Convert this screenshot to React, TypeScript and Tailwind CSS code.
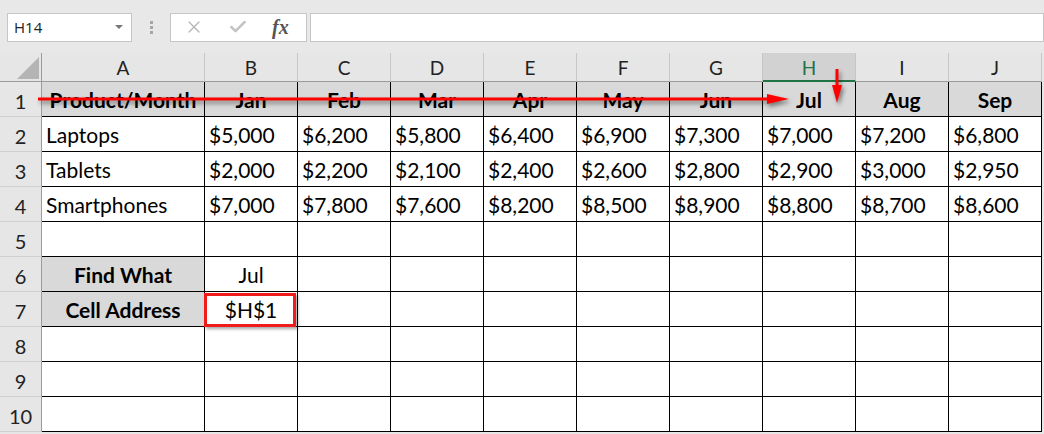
import { X, Check } from 'lucide-react'

const COLS = ['A', 'B', 'C', 'D', 'E', 'F', 'G', 'H', 'I', 'J']

const HEADER = ['Product/Month', 'Jan', 'Feb', 'Mar', 'Apr', 'May', 'Jun', 'Jul', 'Aug', 'Sep']

const DATA: string[][] = [
  ['Laptops', '$5,000', '$6,200', '$5,800', '$6,400', '$6,900', '$7,300', '$7,000', '$7,200', '$6,800'],
  ['Tablets', '$2,000', '$2,200', '$2,100', '$2,400', '$2,600', '$2,800', '$2,900', '$3,000', '$2,950'],
  ['Smartphones', '$7,000', '$7,800', '$7,600', '$8,200', '$8,500', '$8,900', '$8,800', '$8,700', '$8,600'],
]

const font = "font-['Lato','Liberation_Sans',sans-serif]"

function FormulaBar() {
  return (
    <div className="h-[53px] flex items-center pl-[7px] pt-[1px] bg-[#e8e8e8]">
      {/* Name box */}
      <div className="w-[125px] h-[29px] bg-white border border-[#c6c6c6] flex items-center pl-[6px] pr-[8px]">
        <span className="flex-1 text-[15px] text-[#222] font-['Open_Sans',sans-serif]">H14</span>
        <span className="w-0 h-0 border-l-[4px] border-r-[4px] border-t-[4px] border-l-transparent border-r-transparent border-t-[#777]" />
      </div>
      {/* grip */}
      <div className="w-[38px] flex flex-col items-center gap-[2px]">
        <span className="w-[3px] h-[3px] bg-[#a6a6a6]" />
        <span className="w-[3px] h-[3px] bg-[#a6a6a6]" />
        <span className="w-[3px] h-[3px] bg-[#a6a6a6]" />
      </div>
      {/* cancel / enter / fx */}
      <div className="w-[137px] h-[29px] bg-white border border-[#c6c6c6] flex items-center pl-[13px]">
        <X className="w-[20px] h-[20px] text-[#b4b4b4]" strokeWidth={1.5} />
        <Check className="w-[20px] h-[20px] text-[#c4c4c4] ml-[24px]" strokeWidth={3} />
        <span className="ml-[24px] text-[20px] italic font-semibold text-[#555] font-['Liberation_Serif',serif] leading-none">
          fx
        </span>
      </div>
      <div className="ml-[3px] flex-1 h-[29px] bg-white border border-[#c6c6c6]" />
    </div>
  )
}

function Grid() {
  return (
    <div className={`grid grid-cols-[42px_163px_repeat(9,93px)] grid-rows-[29px_repeat(10,35px)] ${font}`}>
      {/* corner */}
      <div className="bg-[#e6e6e6] border-r border-b border-[#9b9b9b] relative">
        <svg className="absolute left-[17px] top-[4px]" width={22} height={22} viewBox="0 0 22 22">
          <polygon points="22,0 22,22 0,22" fill="#b4b4b4" />
        </svg>
      </div>
      {COLS.map(c => (
        <div
          key={c}
          className={
            c === 'H'
              ? 'bg-[#d2d2d2] border-r border-[#c6c6c6] border-b-2 border-b-[#217346] flex items-center justify-center pt-[4px] text-[19px] text-[#217346]'
              : 'bg-[#e6e6e6] border-r border-[#c6c6c6] border-b border-b-[#9b9b9b] flex items-center justify-center pt-[3px] text-[19px] text-[#222]'
          }
        >
          {c}
        </div>
      ))}

      {Array.from({ length: 10 }, (_, r) => {
        const rowNo = r + 1
        return [
          <div
            key={`h${rowNo}`}
            className="bg-[#e6e6e6] border-r border-r-[#9b9b9b] border-b border-b-[#d0d0d0] flex items-center justify-center pt-[4px] text-[20px] text-[#222]"
          >
            {rowNo}
          </div>,
          ...COLS.map((c, ci) => {
            let text = ''
            let cls = 'border-r border-b border-black flex items-center pt-[1px] text-[21px] text-black whitespace-nowrap overflow-visible'
            if (rowNo === 1) {
              text = HEADER[ci]
              cls += ' bg-[#d9d9d9] justify-center font-bold'
            } else if (rowNo >= 2 && rowNo <= 4) {
              text = DATA[rowNo - 2][ci]
              cls += ' bg-white pl-[4px]'
            } else if ((rowNo === 6 || rowNo === 7) && ci === 0) {
              text = rowNo === 6 ? 'Find What' : 'Cell Address'
              cls += ' bg-[#d9d9d9] justify-center font-bold'
            } else if ((rowNo === 6 || rowNo === 7) && ci === 1) {
              text = rowNo === 6 ? 'Jul' : '$H$1'
              cls += ' bg-white justify-center relative'
            } else {
              cls += ' bg-white'
            }
            return (
              <div key={`${c}${rowNo}`} className={cls}>
                {text}
                {rowNo === 7 && ci === 1 && (
                  <span className="absolute left-[-1px] top-[1px] w-[92px] h-[34px] border-[3px] border-[#f01c1c] shadow-[2px_2px_3px_rgba(0,0,0,0.35)]" />
                )}
              </div>
            )
          }),
        ]
      })}
    </div>
  )
}

function Arrows() {
  return (
    <svg
      className="absolute inset-0 pointer-events-none drop-shadow-[2px_3px_2px_rgba(0,0,0,0.45)]"
      width={1044}
      height={434}
      viewBox="0 0 1044 434"
    >
      <line x1={38} y1={99} x2={770} y2={99} stroke="#ff0000" strokeWidth={3} />
      <polygon points="767,94 789,99 767,104" fill="#ff0000" />
      <line x1={837} y1={69} x2={837} y2={87} stroke="#ff0000" strokeWidth={3} />
      <polygon points="832,85 837,103 842,85" fill="#ff0000" />
    </svg>
  )
}

export default function App() {
  return (
    <div className="relative w-[1044px] h-[434px] overflow-hidden bg-[#e6e6e6]">
      <FormulaBar />
      <Grid />
      <Arrows />
    </div>
  )
}
